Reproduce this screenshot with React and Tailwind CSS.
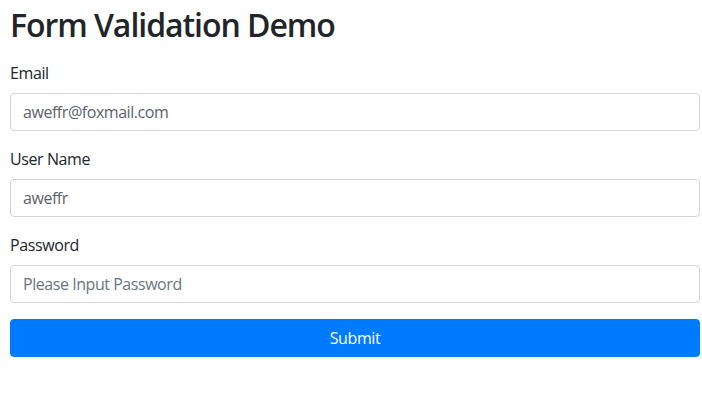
export default function App() {
  const font = { fontFamily: '"Open Sans", "Noto Sans", sans-serif' };
  const inputCls =
    "h-[38px] w-full rounded-[4px] border border-[#ced4da] bg-white px-3 text-base tracking-[-0.45px] text-[#5b636a] outline-none placeholder:text-[#6c757d]";
  return (
    <div className="min-h-[414px] w-full bg-white pl-[10px] pr-[2px] pt-[6px] text-[#212529]" style={font}>
      <h2 className="m-0 text-[32px] font-semibold leading-[38px] tracking-[-1.05px] text-[#212529]">
        Form Validation Demo
      </h2>
      <form className="mt-[17px] flex flex-col" onSubmit={(e) => e.preventDefault()}>
        <div className="mb-4 flex flex-col">
          <label className="mb-2 text-base leading-6 tracking-[-0.4px]">Email</label>
          <input className={inputCls} defaultValue="aweffr@foxmail.com" />
        </div>
        <div className="mb-4 flex flex-col">
          <label className="mb-2 text-base leading-6 tracking-[-0.4px]">User Name</label>
          <input className={inputCls} defaultValue="aweffr" />
        </div>
        <div className="mb-4 flex flex-col">
          <label className="mb-2 text-base leading-6 tracking-[-0.4px]">Password</label>
          <input type="password" className={inputCls} placeholder="Please Input Password" />
        </div>
        <button
          type="submit"
          className="h-[38px] w-full rounded-[4px] border border-[#007bff] bg-[#007bff] text-base tracking-[-0.4px] text-white"
        >
          Submit
        </button>
      </form>
    </div>
  );
}
